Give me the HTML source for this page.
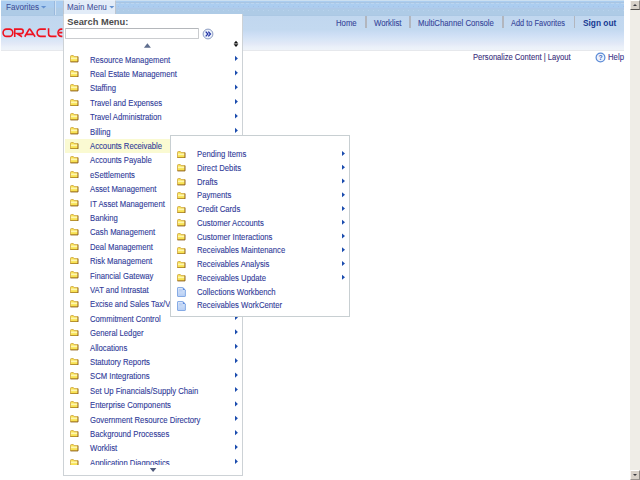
<!DOCTYPE html>
<html><head><meta charset="utf-8"><title>Main Menu</title>
<style>
html,body{margin:0;padding:0;width:640px;height:480px;overflow:hidden;background:#fff;font-family:"Liberation Sans",sans-serif;font-size:7.75px;color:#2f3a98;-webkit-text-stroke:0.1px currentColor}
div,span,i{position:absolute;box-sizing:border-box}
#nav{left:1px;top:0;width:623px;height:15.5px;background:linear-gradient(#abcdf0 0,#abcdf0 42%,#aecbe6 46%,#aecbe6 92%,#a9c6e2 100%);border-top:1px solid #cbdff0}
#nav i{left:115px;width:508px}
#hdr{left:1px;top:15.5px;width:623px;height:35.5px;background:linear-gradient(#c1d7ef 0%,#c3d9f0 40%,#cfdff5 56%,#d9e6f6 70%,#e3e9f7 82%,#ebf1f9 92%,#eff3f9 100%);border-bottom:1px solid #e6e8ec}
#sb{left:630px;top:0;width:10px;height:480px;background:#efede7}
#sbu,#sbd{left:0;width:10px;background:#d8d1c9;border:1px solid #fff;border-left-color:#f4f0ec;border-right-color:#8c8884;border-bottom-color:#55524f}
#sbu{top:0;height:10px}#sbd{top:470.3px;height:9.7px;border-bottom-color:#9a9490}
#sbu i{left:2px;top:2.6px;width:0;height:0;border-bottom:2.6px solid #3a3a40;border-left:2.2px solid transparent;border-right:2.2px solid transparent}
#sbd i{left:2px;top:3px;width:0;height:0;border-top:2.6px solid #3a3a40;border-left:2.2px solid transparent;border-right:2.2px solid transparent}
.tab{-webkit-text-stroke:0.05px currentColor;font-size:8.4px;transform:scaleX(0.962);transform-origin:0 50%;top:2.8px;white-space:nowrap;line-height:9px;color:#3f4f98}
#menu{left:63px;top:14px;width:180px;height:462.4px;background:#fff;border:1px solid #cdd2d6;border-top:none;overflow:hidden}
#mtab{left:63px;top:0;width:52.6px;height:14px;background:#e2ecf8;border:1px solid #bcc5d0;border-top:1px solid #e9f0f9;border-bottom:none}
.row{left:1px;width:178px;height:14.375px;line-height:14.375px;white-space:nowrap}
.row.hl{background:#fafad2}
.srow{left:1px;width:176px;height:13.8px;line-height:13.8px;white-space:nowrap}
.t{left:25.3px;top:0.3px;font-size:8.4px;transform:scaleX(0.92);transform-origin:0 50%}
.srow .t{left:25.05px;top:0.6px}
.srow .ic{left:4.9px;top:3px}
.srow .dc{left:4.8px;top:2.4px}
.srow .ar{right:4.4px;top:2.9px}
.ic{position:absolute;left:5px;top:3.1px}
.ar{right:5.2px;top:3.4px;width:0;height:0;border-left:3.1px solid #2254b0;border-top:2.8px solid transparent;border-bottom:2.8px solid transparent}
#sub{left:170.2px;top:135.2px;width:179.6px;height:182.3px;background:#fff;border:1px solid #c8cfd2;overflow:hidden}
.dd{top:6px;margin-left:0px;width:0;height:0;border-top:3px solid #6391d0;border-left:2.9px solid transparent;border-right:2.9px solid transparent}
.lnk{top:18.7px;white-space:nowrap;line-height:9px;color:#36469a;font-size:8.4px;transform:scaleX(0.926);transform-origin:0 50%;-webkit-text-stroke:0.1px currentColor}
.sep{top:16px;width:1.6px;height:11.5px;background:#b2b6be}
</style></head><body>
<svg width="0" height="0" style="position:absolute"><defs>
<g id="fold"><path d="M0.5 1.5 Q0.5 0.5 1.4 0.5 L3.3 0.5 L4.2 1.6 L8 1.6 L8 6.9 L0.5 6.9 Z" fill="#f8e252"/><path d="M0.9 2.5 H7.6 V4.2 H0.9Z" fill="#fef6b0"/><path d="M0.5 6.9 L0.5 1.5 Q0.5 0.5 1.4 0.5 L3.3 0.5 L4.2 1.6 L8 1.6" fill="none" stroke="#c79a34" stroke-width="0.7"/><path d="M8 1.6 L8 6.9 L0.5 6.9" fill="none" stroke="#8f5e1a" stroke-width="1"/></g>
<g id="doc"><path d="M1 0.5 H5.8 L8.4 3 V9 Q8.4 9.5 7.9 9.5 H1 Q0.5 9.5 0.5 9 V1 Q0.5 0.5 1 0.5Z" fill="url(#dg)" stroke="#6e9ae0" stroke-width="0.8"/><path d="M5.8 0.5 V3 H8.4Z" fill="#5d8be0"/><path d="M2 2.7H4.8M2 3.9H5.6" stroke="#a4c0ee" stroke-width="0.6"/></g><linearGradient id="dg" x1="0" y1="0" x2="0" y2="1"><stop offset="0" stop-color="#dce8fa"/><stop offset="1" stop-color="#b6cef4"/></linearGradient>
</defs></svg>
<div id="nav">
<i style="top:0.5px;height:0.7px;background:#a9c5e2"></i>
<i style="top:1.9px;height:1px;background:repeating-linear-gradient(90deg,#bbd5ef 0 3px,transparent 3px 5px)"></i>
<i style="top:5.1px;height:1.1px;background:repeating-linear-gradient(90deg,transparent 0 1.8px,#a6c0e6 1.8px 3.2px,transparent 3.2px 5px)"></i>
<i style="top:6.6px;height:1.2px;background:#afc8e8"></i>
<i style="top:8.9px;height:1px;background:repeating-linear-gradient(90deg,transparent 0 1.8px,#b9d3ee 1.8px 3.2px,transparent 3.2px 5px)"></i>
</div>
<div id="hdr"></div>
<span class="tab" style="left:6px">Favorites</span>
<i style="left:54px;top:1px;width:1px;height:14px;background:#9ab9dd"></i><i style="left:55px;top:1px;width:1px;height:14px;background:#d0e1f3"></i>
<div id="mtab"></div>
<svg style="position:absolute;left:0;top:0" width="130" height="16" viewBox="0 0 130 16"><polygon points="40.90,6.00 43.60,8.60 46.30,6.00" fill="#6391d0"/><polygon points="109.30,6.00 111.80,8.60 114.30,6.00" fill="#6391d0"/></svg>
<span class="tab" style="left:67px">Main Menu</span>
<svg style="position:absolute;left:2px;top:28.3px" width="62" height="10" viewBox="0 0 62 10"><g fill="none" stroke="#ef1320" stroke-width="1.62" transform="translate(0.1,0) scale(0.972,1.05)">
<rect x="1" y="1" width="10" height="7" rx="3.5"/>
<path d="M13 8.5V1H19.5a2.2 2.2 0 0 1 0 4.4H15.5L20.5 8.3"/>
<path d="M23.3 8.4L27.6 1.4a0.8 0.8 0 0 1 1.4 0L34 8.4M25 6H32"/>
<path d="M45 1H39.5a3.5 3.5 0 0 0 0 7H45"/>
<path d="M47.8 0.3V5.5a2.5 2.5 0 0 0 2.5 2.5H56"/>
<path d="M62 1H61a3.5 3.5 0 0 0 0 7H62M58.5 4.5H62"/>
</g></svg>
<span class="lnk" style="left:335.5px">Home</span>
<span class="lnk" style="left:373.5px">Worklist</span>
<span class="lnk" style="left:418px">MultiChannel Console</span>
<span class="lnk" style="left:511px;font-size:8.2px;transform:scaleX(0.905);transform-origin:0 50%">Add to Favorites</span>
<span class="lnk" style="left:582.5px;top:19.2px;font-weight:bold;font-size:8.9px;transform:scaleX(0.938);color:#173a92;-webkit-text-stroke:0">Sign out</span>
<i class="sep" style="left:365px"></i><i class="sep" style="left:409px"></i><i class="sep" style="left:502px"></i><i class="sep" style="left:573.6px"></i>
<span class="lnk" style="left:472.5px;top:53px;color:#3a2f7c;font-size:8.3px;transform:scaleX(0.917)">Personalize Content | Layout</span>
<span class="lnk" style="left:607.5px;top:53px;color:#3a3488">Help</span>
<svg style="position:absolute;left:594.5px;top:51.8px" width="11" height="11" viewBox="0 0 11 11"><circle cx="5.5" cy="5.5" r="4.4" fill="#edf3fd" stroke="#5b8ad6" stroke-width="1.2"/><text x="5.5" y="8" font-size="6.8" font-weight="bold" text-anchor="middle" fill="#3a66c0" stroke="none" font-family="Liberation Sans">?</text></svg>
<div id="menu">
<span style="left:3.3px;top:2.9px;font-weight:bold;font-size:9.3px;-webkit-text-stroke:0;line-height:11px;color:#4d4d4d;white-space:nowrap">Search Menu:</span>
<div style="left:1.2px;top:14.4px;width:134.2px;height:10.4px;border:1px solid #cacccf;border-top-color:#b4b7bb;border-radius:1px;background:#fff"></div>
<svg style="position:absolute;left:137.5px;top:13.6px" width="12" height="12" viewBox="0 0 12 12"><circle cx="6" cy="6" r="4.9" fill="#ebf1fb" stroke="#8b9cc2" stroke-width="1"/><path d="M3.7 3.6L5.9 6L3.7 8.4M6.3 3.6L8.5 6L6.3 8.4" fill="none" stroke="#2334a6" stroke-width="1.25"/></svg>
<div id="rows" style="left:0;top:-14px;width:180px;height:464.5px;overflow:hidden">
<div class="row" style="top:52.35px"><svg class="ic" width="8.6" height="7.5" viewBox="0 0 8.6 7.5"><use href="#fold"/></svg><span class="t">Resource Management</span></div>
<div class="row" style="top:66.75px"><svg class="ic" width="8.6" height="7.5" viewBox="0 0 8.6 7.5"><use href="#fold"/></svg><span class="t">Real Estate Management</span></div>
<div class="row" style="top:81.14px"><svg class="ic" width="8.6" height="7.5" viewBox="0 0 8.6 7.5"><use href="#fold"/></svg><span class="t">Staffing</span></div>
<div class="row" style="top:95.53px"><svg class="ic" width="8.6" height="7.5" viewBox="0 0 8.6 7.5"><use href="#fold"/></svg><span class="t">Travel and Expenses</span></div>
<div class="row" style="top:109.93px"><svg class="ic" width="8.6" height="7.5" viewBox="0 0 8.6 7.5"><use href="#fold"/></svg><span class="t">Travel Administration</span></div>
<div class="row" style="top:124.32px"><svg class="ic" width="8.6" height="7.5" viewBox="0 0 8.6 7.5"><use href="#fold"/></svg><span class="t">Billing</span></div>
<div class="row hl" style="top:138.72px"><svg class="ic" width="8.6" height="7.5" viewBox="0 0 8.6 7.5"><use href="#fold"/></svg><span class="t">Accounts Receivable</span></div>
<div class="row" style="top:153.12px"><svg class="ic" width="8.6" height="7.5" viewBox="0 0 8.6 7.5"><use href="#fold"/></svg><span class="t">Accounts Payable</span></div>
<div class="row" style="top:167.51px"><svg class="ic" width="8.6" height="7.5" viewBox="0 0 8.6 7.5"><use href="#fold"/></svg><span class="t">eSettlements</span></div>
<div class="row" style="top:181.91px"><svg class="ic" width="8.6" height="7.5" viewBox="0 0 8.6 7.5"><use href="#fold"/></svg><span class="t">Asset Management</span></div>
<div class="row" style="top:196.30px"><svg class="ic" width="8.6" height="7.5" viewBox="0 0 8.6 7.5"><use href="#fold"/></svg><span class="t">IT Asset Management</span></div>
<div class="row" style="top:210.69px"><svg class="ic" width="8.6" height="7.5" viewBox="0 0 8.6 7.5"><use href="#fold"/></svg><span class="t">Banking</span></div>
<div class="row" style="top:225.09px"><svg class="ic" width="8.6" height="7.5" viewBox="0 0 8.6 7.5"><use href="#fold"/></svg><span class="t">Cash Management</span></div>
<div class="row" style="top:239.48px"><svg class="ic" width="8.6" height="7.5" viewBox="0 0 8.6 7.5"><use href="#fold"/></svg><span class="t">Deal Management</span></div>
<div class="row" style="top:253.88px"><svg class="ic" width="8.6" height="7.5" viewBox="0 0 8.6 7.5"><use href="#fold"/></svg><span class="t">Risk Management</span></div>
<div class="row" style="top:268.27px"><svg class="ic" width="8.6" height="7.5" viewBox="0 0 8.6 7.5"><use href="#fold"/></svg><span class="t">Financial Gateway</span></div>
<div class="row" style="top:282.67px"><svg class="ic" width="8.6" height="7.5" viewBox="0 0 8.6 7.5"><use href="#fold"/></svg><span class="t">VAT and Intrastat</span></div>
<div class="row" style="top:297.06px"><svg class="ic" width="8.6" height="7.5" viewBox="0 0 8.6 7.5"><use href="#fold"/></svg><span class="t">Excise and Sales Tax/VAT IND</span></div>
<div class="row" style="top:311.46px"><svg class="ic" width="8.6" height="7.5" viewBox="0 0 8.6 7.5"><use href="#fold"/></svg><span class="t">Commitment Control</span></div>
<div class="row" style="top:325.86px"><svg class="ic" width="8.6" height="7.5" viewBox="0 0 8.6 7.5"><use href="#fold"/></svg><span class="t">General Ledger</span></div>
<div class="row" style="top:340.25px"><svg class="ic" width="8.6" height="7.5" viewBox="0 0 8.6 7.5"><use href="#fold"/></svg><span class="t">Allocations</span></div>
<div class="row" style="top:354.65px"><svg class="ic" width="8.6" height="7.5" viewBox="0 0 8.6 7.5"><use href="#fold"/></svg><span class="t">Statutory Reports</span></div>
<div class="row" style="top:369.04px"><svg class="ic" width="8.6" height="7.5" viewBox="0 0 8.6 7.5"><use href="#fold"/></svg><span class="t">SCM Integrations</span></div>
<div class="row" style="top:383.44px"><svg class="ic" width="8.6" height="7.5" viewBox="0 0 8.6 7.5"><use href="#fold"/></svg><span class="t">Set Up Financials/Supply Chain</span></div>
<div class="row" style="top:397.83px"><svg class="ic" width="8.6" height="7.5" viewBox="0 0 8.6 7.5"><use href="#fold"/></svg><span class="t">Enterprise Components</span></div>
<div class="row" style="top:412.23px"><svg class="ic" width="8.6" height="7.5" viewBox="0 0 8.6 7.5"><use href="#fold"/></svg><span class="t">Government Resource Directory</span></div>
<div class="row" style="top:426.62px"><svg class="ic" width="8.6" height="7.5" viewBox="0 0 8.6 7.5"><use href="#fold"/></svg><span class="t">Background Processes</span></div>
<div class="row" style="top:441.01px"><svg class="ic" width="8.6" height="7.5" viewBox="0 0 8.6 7.5"><use href="#fold"/></svg><span class="t">Worklist</span></div>
<div class="row" style="top:455.41px"><svg class="ic" width="8.6" height="7.5" viewBox="0 0 8.6 7.5"><use href="#fold"/></svg><span class="t">Application Diagnostics</span></div>
</div>
<svg style="position:absolute;left:-64px;top:-14px" width="640" height="480" viewBox="0 0 640 480"><clipPath id="rc"><rect x="0" y="0" width="640" height="464.5"/></clipPath><polygon points="235.00,55.80 237.90,58.40 235.00,61.00" fill="#1b4cae" clip-path="url(#rc)"/><polygon points="235.00,70.20 237.90,72.80 235.00,75.39" fill="#1b4cae" clip-path="url(#rc)"/><polygon points="235.00,84.59 237.90,87.19 235.00,89.79" fill="#1b4cae" clip-path="url(#rc)"/><polygon points="235.00,98.98 237.90,101.58 235.00,104.18" fill="#1b4cae" clip-path="url(#rc)"/><polygon points="235.00,113.38 237.90,115.98 235.00,118.58" fill="#1b4cae" clip-path="url(#rc)"/><polygon points="235.00,127.78 237.90,130.38 235.00,132.97" fill="#1b4cae" clip-path="url(#rc)"/><polygon points="235.00,142.17 237.90,144.77 235.00,147.37" fill="#1b4cae" clip-path="url(#rc)"/><polygon points="235.00,156.57 237.90,159.17 235.00,161.77" fill="#1b4cae" clip-path="url(#rc)"/><polygon points="235.00,170.96 237.90,173.56 235.00,176.16" fill="#1b4cae" clip-path="url(#rc)"/><polygon points="235.00,185.36 237.90,187.96 235.00,190.56" fill="#1b4cae" clip-path="url(#rc)"/><polygon points="235.00,199.75 237.90,202.35 235.00,204.95" fill="#1b4cae" clip-path="url(#rc)"/><polygon points="235.00,214.15 237.90,216.75 235.00,219.34" fill="#1b4cae" clip-path="url(#rc)"/><polygon points="235.00,228.54 237.90,231.14 235.00,233.74" fill="#1b4cae" clip-path="url(#rc)"/><polygon points="235.00,242.94 237.90,245.53 235.00,248.13" fill="#1b4cae" clip-path="url(#rc)"/><polygon points="235.00,257.33 237.90,259.93 235.00,262.53" fill="#1b4cae" clip-path="url(#rc)"/><polygon points="235.00,271.72 237.90,274.32 235.00,276.93" fill="#1b4cae" clip-path="url(#rc)"/><polygon points="235.00,286.12 237.90,288.72 235.00,291.32" fill="#1b4cae" clip-path="url(#rc)"/><polygon points="235.00,300.51 237.90,303.12 235.00,305.72" fill="#1b4cae" clip-path="url(#rc)"/><polygon points="235.00,314.91 237.90,317.51 235.00,320.11" fill="#1b4cae" clip-path="url(#rc)"/><polygon points="235.00,329.31 237.90,331.91 235.00,334.51" fill="#1b4cae" clip-path="url(#rc)"/><polygon points="235.00,343.70 237.90,346.30 235.00,348.90" fill="#1b4cae" clip-path="url(#rc)"/><polygon points="235.00,358.10 237.90,360.70 235.00,363.30" fill="#1b4cae" clip-path="url(#rc)"/><polygon points="235.00,372.49 237.90,375.09 235.00,377.69" fill="#1b4cae" clip-path="url(#rc)"/><polygon points="235.00,386.88 237.90,389.49 235.00,392.09" fill="#1b4cae" clip-path="url(#rc)"/><polygon points="235.00,401.28 237.90,403.88 235.00,406.48" fill="#1b4cae" clip-path="url(#rc)"/><polygon points="235.00,415.68 237.90,418.28 235.00,420.88" fill="#1b4cae" clip-path="url(#rc)"/><polygon points="235.00,430.07 237.90,432.67 235.00,435.27" fill="#1b4cae" clip-path="url(#rc)"/><polygon points="235.00,444.46 237.90,447.06 235.00,449.67" fill="#1b4cae" clip-path="url(#rc)"/><polygon points="235.00,458.86 237.90,461.46 235.00,464.06" fill="#1b4cae" clip-path="url(#rc)"/><polygon points="143.90,47.70 147.40,43.30 150.90,47.70" fill="#5f6e8e"/><polygon points="233.60,43.50 236.00,40.70 238.40,43.50" fill="#111"/><polygon points="233.60,44.20 236.00,47.00 238.40,44.20" fill="#111"/><polygon points="149.80,468.00 153.10,472.00 156.40,468.00" fill="#4f5a7c"/></svg>
</div>
<div id="sub">
<div class="srow" style="top:11.35px"><svg class="ic" width="8.6" height="7.5" viewBox="0 0 8.6 7.5"><use href="#fold"/></svg><span class="t">Pending Items</span></div>
<div class="srow" style="top:25.10px"><svg class="ic" width="8.6" height="7.5" viewBox="0 0 8.6 7.5"><use href="#fold"/></svg><span class="t">Direct Debits</span></div>
<div class="srow" style="top:38.85px"><svg class="ic" width="8.6" height="7.5" viewBox="0 0 8.6 7.5"><use href="#fold"/></svg><span class="t">Drafts</span></div>
<div class="srow" style="top:52.60px"><svg class="ic" width="8.6" height="7.5" viewBox="0 0 8.6 7.5"><use href="#fold"/></svg><span class="t">Payments</span></div>
<div class="srow" style="top:66.35px"><svg class="ic" width="8.6" height="7.5" viewBox="0 0 8.6 7.5"><use href="#fold"/></svg><span class="t">Credit Cards</span></div>
<div class="srow" style="top:80.10px"><svg class="ic" width="8.6" height="7.5" viewBox="0 0 8.6 7.5"><use href="#fold"/></svg><span class="t">Customer Accounts</span></div>
<div class="srow" style="top:93.85px"><svg class="ic" width="8.6" height="7.5" viewBox="0 0 8.6 7.5"><use href="#fold"/></svg><span class="t">Customer Interactions</span></div>
<div class="srow" style="top:107.60px"><svg class="ic" width="8.6" height="7.5" viewBox="0 0 8.6 7.5"><use href="#fold"/></svg><span class="t">Receivables Maintenance</span></div>
<div class="srow" style="top:121.35px"><svg class="ic" width="8.6" height="7.5" viewBox="0 0 8.6 7.5"><use href="#fold"/></svg><span class="t">Receivables Analysis</span></div>
<div class="srow" style="top:135.10px"><svg class="ic" width="8.6" height="7.5" viewBox="0 0 8.6 7.5"><use href="#fold"/></svg><span class="t">Receivables Update</span></div>
<div class="srow" style="top:148.85px"><svg class="ic dc" width="9" height="10" viewBox="0 0 9 10"><use href="#doc"/></svg><span class="t">Collections Workbench</span></div>
<div class="srow" style="top:162.60px"><svg class="ic dc" width="9" height="10" viewBox="0 0 9 10"><use href="#doc"/></svg><span class="t">Receivables WorkCenter</span></div>
<svg style="position:absolute;left:0;top:0" width="178" height="181" viewBox="171.2 136.2 178 181"><polygon points="342.20,151.30 345.20,153.80 342.20,156.30" fill="#1b4cae"/><polygon points="342.20,165.05 345.20,167.55 342.20,170.05" fill="#1b4cae"/><polygon points="342.20,178.80 345.20,181.30 342.20,183.80" fill="#1b4cae"/><polygon points="342.20,192.55 345.20,195.05 342.20,197.55" fill="#1b4cae"/><polygon points="342.20,206.30 345.20,208.80 342.20,211.30" fill="#1b4cae"/><polygon points="342.20,220.05 345.20,222.55 342.20,225.05" fill="#1b4cae"/><polygon points="342.20,233.80 345.20,236.30 342.20,238.80" fill="#1b4cae"/><polygon points="342.20,247.55 345.20,250.05 342.20,252.55" fill="#1b4cae"/><polygon points="342.20,261.30 345.20,263.80 342.20,266.30" fill="#1b4cae"/><polygon points="342.20,275.05 345.20,277.55 342.20,280.05" fill="#1b4cae"/></svg>
</div>
<div id="sb"><div id="sbu"><i></i></div><div id="sbd"><i></i></div></div>
</body></html>
